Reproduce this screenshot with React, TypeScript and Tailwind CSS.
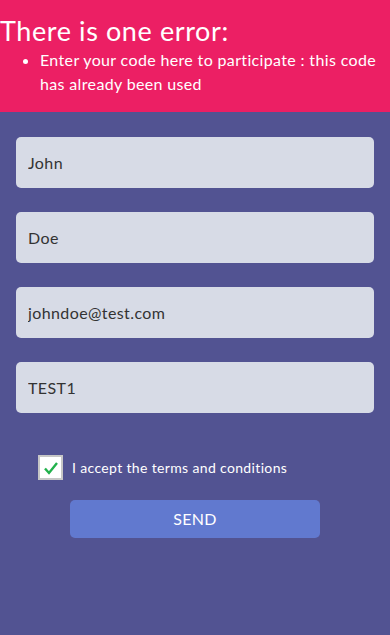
export default function App() {
  const fields = ["John", "Doe", "johndoe@test.com", "TEST1"];

  return (
    <div
      className="min-h-[635px] bg-[#525392] tracking-[0.35px]"
      style={{ fontFamily: "Lato, 'Open Sans', sans-serif" }}
    >
      <div className="bg-[#ec1f64] pt-[14px] pb-[16px] text-white">
        <h2 className="text-[27px] leading-[34px] tracking-[0.6px]">There is one error:</h2>
        <ul className="list-disc pl-[40px] pr-[12px] text-[16px] leading-[24px]">
          <li>Enter your code here to participate : this code has already been used</li>
        </ul>
      </div>

      <form className="px-4 pt-[25px]">
        <div className="flex flex-col gap-[24px]">
          {fields.map((value) => (
            <input
              key={value}
              defaultValue={value}
              className="h-[51px] w-full rounded-[5px] bg-[#d7dbe6] px-3 text-[16px] tracking-[0.4px] text-[#333] outline-none"
            />
          ))}
        </div>

        <label className="mt-[42px] flex items-center gap-[9px] pl-[22px] text-[14px] text-white">
          <span className="flex h-[25px] w-[25px] items-center justify-center border-2 border-[#c6c6c6] bg-white">
            <svg width="16" height="14" viewBox="0 0 16 14">
              <path d="M2 7.5l4 4.5 8-10" fill="none" stroke="#22b14c" strokeWidth="2.4" />
            </svg>
          </span>
          I accept the terms and conditions
        </label>

        <div className="mt-[20px] flex justify-center">
          <button
            type="button"
            className="h-[38px] w-[250px] rounded-[5px] bg-[#6179cf] text-[16px] text-white"
          >
            SEND
          </button>
        </div>
      </form>
    </div>
  );
}
